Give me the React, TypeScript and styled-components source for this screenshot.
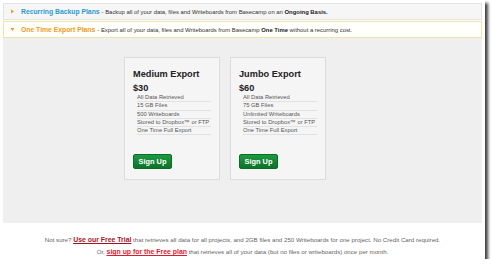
import React from "react";
import styled, { createGlobalStyle } from "styled-components";

const Global = createGlobalStyle`
  html, body {
    margin: 0;
    padding: 0;
    background: #ffffff;
  }
  body {
    font-family: "Liberation Sans", Arial, sans-serif;
    color: #333;
  }
`;

const Frame = styled.div`
  width: 485px;
  height: 259px;
  background: #fff;
  box-shadow: 3px 3px 3px rgba(0, 0, 0, 0.75);
  overflow: hidden;
  padding: 3px 3px 0 3px;
  box-sizing: border-box;
`;

const PlanRow = styled.div<{ open?: boolean }>`
  display: flex;
  align-items: center;
  height: 17px;
  box-sizing: border-box;
  padding-left: 6px;
  border: 1px solid ${(p) => (p.open ? "#f2e3a6" : "#e3e3e3")};
  background: ${(p) => (p.open ? "#fffffb" : "#f6f6f6")};
  font-size: 5.9px;
  color: #333;
  white-space: nowrap;
  & + & {
    margin-top: 1px;
  }
  b {
    color: #222;
  }
`;

const Arrow = styled.svg`
  width: 5px;
  height: 5px;
  margin-right: 6px;
  flex: none;
`;

const PlanTitle = styled.span<{ tone: string }>`
  font-weight: bold;
  font-size: 6.8px;
  color: ${(p) => p.tone};
  margin-right: 2px;
`;

const Panel = styled.div`
  background: #efefef;
  height: 185px;
  display: flex;
  gap: 10px;
  padding: 19px 0 0 121px;
  box-sizing: border-box;
  align-items: flex-start;
`;

const Card = styled.div`
  width: 96px;
  height: 123px;
  box-sizing: border-box;
  background: #f5f5f5;
  border: 1px solid #dcdcdc;
  padding: 11px 8px 0 8px;
  display: flex;
  flex-direction: column;
`;

const CardName = styled.div`
  font-weight: bold;
  font-size: 9.2px;
  color: #222;
  line-height: 11px;
`;

const Price = styled.div`
  font-weight: bold;
  font-size: 9.2px;
  color: #222;
  line-height: 11px;
  margin-top: 3px;
`;

const Features = styled.ul`
  list-style: none;
  margin: 0;
  padding: 0 0 0 4px;
`;

const Feature = styled.li`
  font-size: 5.8px;
  color: #555;
  line-height: 7.8px;
  height: 8.3px;
  box-sizing: border-box;
  border-bottom: 1px solid #e2e2e2;
  white-space: nowrap;
`;

const SignUp = styled.button`
  margin-top: 19px;
  width: 39px;
  height: 15px;
  padding: 0;
  border: 1px solid #0c6b26;
  border-radius: 2px;
  background: linear-gradient(#1d9a42, #0b7428);
  color: #fff;
  font-family: "Liberation Sans", Arial, sans-serif;
  font-weight: bold;
  font-size: 7.4px;
  cursor: pointer;
`;

const Footer = styled.div`
  margin-top: 11px;
  text-align: center;
  font-size: 6.15px;
  line-height: 12px;
  color: #666;
`;

const FooterLink = styled.a<{ tone: string }>`
  color: ${(p) => p.tone};
  font-weight: bold;
  font-size: 6.9px;
  text-decoration: underline;
`;

const plans = [
  {
    name: "Medium Export",
    price: "$30",
    features: [
      "All Data Retrieved",
      "15 GB Files",
      "500 Writeboards",
      "Stored to Dropbox\u2122 or FTP",
      "One Time Full Export",
    ],
  },
  {
    name: "Jumbo Export",
    price: "$60",
    features: [
      "All Data Retrieved",
      "75 GB Files",
      "Unlimited Writeboards",
      "Stored to Dropbox\u2122 or FTP",
      "One Time Full Export",
    ],
  },
];

export default function App() {
  return (
    <>
      <Global />
      <Frame>
        <PlanRow>
          <Arrow viewBox="0 0 5 5">
            <polygon points="1,0.5 4,2.5 1,4.5" fill="#f39a1e" />
          </Arrow>
          <PlanTitle tone="#2a9bd4">Recurring Backup Plans</PlanTitle>
          <span>
            - Backup all of your data, files and Writeboards from Basecamp on an{" "}
            <b>Ongoing Basis.</b>
          </span>
        </PlanRow>
        <PlanRow open>
          <Arrow viewBox="0 0 5 5">
            <polygon points="0.5,1 4.5,1 2.5,4" fill="#f39a1e" />
          </Arrow>
          <PlanTitle tone="#f39a1e">One Time Export Plans</PlanTitle>
          <span>
            - Export all of your data, files and Writeboards from Basecamp <b>One Time</b>{" "}
            without a recurring cost.
          </span>
        </PlanRow>
        <Panel>
          {plans.map((plan) => (
            <Card key={plan.name}>
              <CardName>{plan.name}</CardName>
              <Price>{plan.price}</Price>
              <Features>
                {plan.features.map((f) => (
                  <Feature key={f}>{f}</Feature>
                ))}
              </Features>
              <SignUp>Sign Up</SignUp>
            </Card>
          ))}
        </Panel>
        <Footer>
          <div>
            Not sure? <FooterLink tone="#a3151f">Use our Free Trial</FooterLink> that retrieves
            all data for all projects, and 2GB files and 250 Writeboards for one project. No
            Credit Card required.
          </div>
          <div>
            Or, <FooterLink tone="#e01b2f">sign up for the Free plan</FooterLink> that retrieves
            all of your data (but no files or writeboards) once per month.
          </div>
        </Footer>
      </Frame>
    </>
  );
}
